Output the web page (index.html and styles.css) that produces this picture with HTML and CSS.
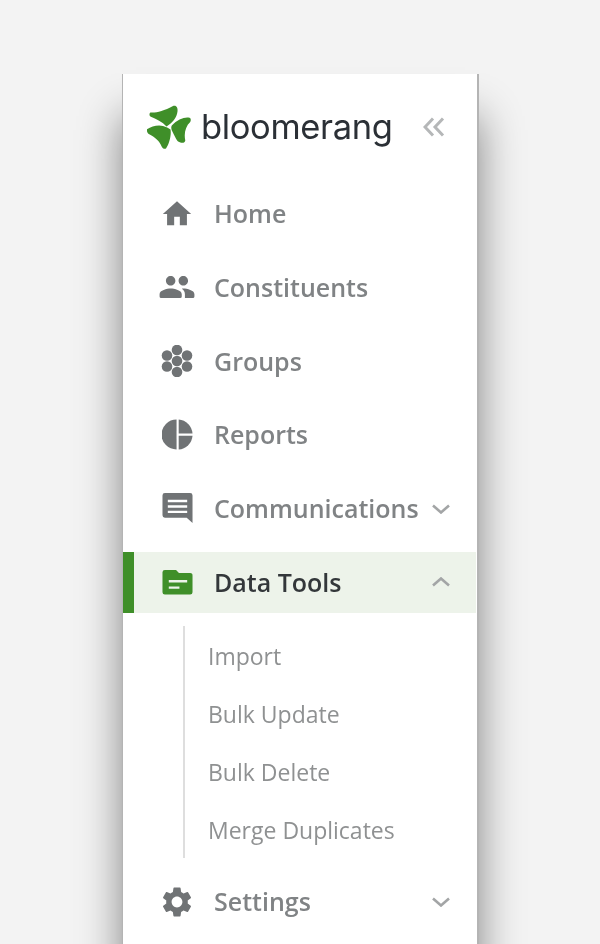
FILE: index.html
```html
<!DOCTYPE html>
<html lang="en">
<head>
<meta charset="utf-8">
<title>Bloomerang navigation</title>
<link rel="stylesheet" href="styles.css">
</head>
<body>
<aside class="sidebar">
  <header class="brand">
    <svg class="logo-mark" viewBox="0 0 44 44" width="44" height="44" aria-hidden="true">
      <path d="M3.500 7.500C9 8 16 6.500 26.500.8 29.500 0 31 3 30.500 6.500 29.800 12.500 25.500 18 19.500 21.500 15.500 17 9 14 3.800 11.800 2 10.800 2.300 8 3.500 7.500z"/>
      <path d="M42.500 12.800C38 11.500 30.500 14.500 24.800 20.500 23.800 22 24.300 24.800 25.500 26.800 27.500 30.500 28.500 33.500 30.500 36 33 38 37.800 39 38.300 35.500 36.800 29 38.300 21.500 43.200 17 44.200 15 43.800 13.300 42.500 12.800z"/>
      <path d="M.4 24C4 21.500 11 19.500 16 21 19 22 21.500 23 23.500 24.500 24.500 30 22.500 38.500 19 43.500 17.500 44.500 15.300 43.200 14.500 41.200 12.800 36.500 8 32 1.800 29 0 28-.4 25-.0 24.300z"/>
    </svg>
    <span class="wordmark">bloomerang</span>
    <svg class="collapse" viewBox="0 0 22 20" width="22" height="20" aria-hidden="true">
      <path d="M10 1.500 2 10l8 8.500M20 1.500 12 10l8 8.500"/>
    </svg>
  </header>
  <nav class="nav">
    <a class="row">
      <span class="icon"><svg viewBox="0 0 24 24" width="34" height="34"><path d="M10 20v-6h4v6h5v-8h3L12 3 2 12h3v8z"/></svg></span>
      <span class="label">Home</span>
    </a>
    <a class="row">
      <span class="icon"><svg viewBox="0 0 24 24" width="38" height="38"><path d="M16 11c1.660 0 2.990-1.340 2.990-3S17.660 5 16 5c-1.660 0-3 1.340-3 3s1.340 3 3 3zm-8 0c1.660 0 2.990-1.340 2.990-3S9.660 5 8 5C6.340 5 5 6.340 5 8s1.340 3 3 3zm0 2c-2.330 0-7 1.170-7 3.500V18a1 1 0 0 0 1 1h12a1 1 0 0 0 1-1v-1.500c0-2.330-4.670-3.500-7-3.500zm8 0c-.29 0-.62.020-.97.050 1.160.84 1.970 1.970 1.970 3.450V19h5a1 1 0 0 0 1-1v-1.500c0-2.330-4.670-3.500-7-3.500z"/></svg></span>
      <span class="label">Constituents</span>
    </a>
    <a class="row">
      <span class="icon"><svg viewBox="0 0 32 32" width="32" height="32"><circle cx="16" cy="5" r="5.300"/><circle cx="16" cy="27" r="5.300"/><circle cx="16" cy="16" r="5.300"/><circle cx="6" cy="10.500" r="5.300"/><circle cx="26" cy="10.500" r="5.300"/><circle cx="6" cy="21.500" r="5.300"/><circle cx="26" cy="21.500" r="5.300"/></svg></span>
      <span class="label">Groups</span>
    </a>
    <a class="row">
      <span class="icon"><svg viewBox="0 0 32 32" width="31" height="31"><path d="M15 .5v31A15.500 15.500 0 0 1 15 .5z"/><path d="M17.200.5A15.500 15.500 0 0 1 31.500 15h-14.300z"/><path d="M17.200 17.200h14.300A15.500 15.500 0 0 1 17.200 31.500z"/></svg></span>
      <span class="label">Reports</span>
    </a>
    <a class="row">
      <span class="icon"><svg viewBox="0 0 32 32" width="31" height="31"><path fill-rule="evenodd" d="M3 0h26a2.500 2.500 0 0 1 2.500 2.500V31l-6-5.500H3A2.500 2.500 0 0 1 .5 23V2.500A2.500 2.500 0 0 1 3 0zm3 7v2.500h20V7zm0 5.600v2.500h20v-2.500zm0 5.600v2.500h20v-2.500z"/></svg></span>
      <span class="label">Communications</span>
      <svg class="chevron" viewBox="0 0 20 10" width="20" height="10"><path d="M2 1.500 10 8.500l8-7"/></svg>
    </a>
    <a class="row row-active">
      <span class="icon"><svg viewBox="0 0 32 32" width="31" height="31"><path fill-rule="evenodd" d="M3 3h11.500l3 3.300H29A2.500 2.500 0 0 1 31.500 9v17a2.500 2.500 0 0 1-2.500 2.500H3A2.500 2.500 0 0 1 .5 26V5.500A2.500 2.500 0 0 1 3 3zm4 10.500V16h19v-2.500zm0 6.500v2.500h11V20z"/></svg></span>
      <span class="label">Data Tools</span>
      <svg class="chevron" viewBox="0 0 20 10" width="20" height="10"><path d="M2 8.500 10 1.500l8 7"/></svg>
    </a>
    <ul class="subnav">
      <li class="subitem">Import</li>
      <li class="subitem">Bulk Update</li>
      <li class="subitem">Bulk Delete</li>
      <li class="subitem">Merge Duplicates</li>
    </ul>
    <a class="row">
      <span class="icon"><svg viewBox="0 0 24 24" width="36" height="36"><path d="M19.140 12.940c.04-.3.060-.61.060-.94 0-.32-.02-.64-.07-.94l2.030-1.580a.49.490 0 0 0 .12-.61l-1.920-3.320a.488.488 0 0 0-.59-.22l-2.390.96c-.5-.38-1.030-.7-1.620-.94l-.36-2.540a.484.484 0 0 0-.48-.41h-3.840c-.24 0-.43.170-.47.410l-.36 2.540c-.59.24-1.130.57-1.620.94l-2.390-.96c-.22-.08-.47 0-.59.22L2.740 8.870c-.12.21-.08.47.12.61l2.030 1.580c-.05.3-.09.63-.09.94s.02.64.07.94l-2.030 1.580a.49.490 0 0 0-.12.61l1.920 3.320c.12.22.37.29.59.22l2.390-.96c.5.38 1.030.7 1.620.94l.36 2.540c.05.24.24.41.48.41h3.840c.24 0 .44-.17.47-.41l.36-2.540c.59-.24 1.130-.56 1.620-.94l2.390.96c.22.08.47 0 .59-.22l1.920-3.320c.12-.22.07-.47-.12-.61l-2.010-1.580zM12 15.600c-1.980 0-3.600-1.620-3.600-3.600s1.620-3.600 3.600-3.600 3.600 1.620 3.600 3.600-1.620 3.600-3.600 3.600z"/></svg></span>
      <span class="label">Settings</span>
      <svg class="chevron" viewBox="0 0 20 10" width="20" height="10"><path d="M2 1.500 10 8.500l8-7"/></svg>
    </a>
  </nav>
</aside>
</body>
</html>
```

FILE: styles.css
```css
* { box-sizing: border-box; }
html, body { height: 100%; }
html { overflow: hidden; }
body {
  margin: 0;
  background: #f3f3f3;
  font-family: "Open Sans", "Liberation Sans", sans-serif;
  overflow: hidden;
}
.sidebar {
  width: 357px;
  height: 870px;
  margin: 74px 0 0 122px;
  background: #fff;
  border-left: 1px solid #b4b4b4;
  border-right: 2px solid #b4b4b4;
  box-shadow: 0 42px 40px rgba(0, 0, 0, 0.46);
}
.brand, .nav { filter: blur(0.35px); }
.brand {
  display: flex;
  align-items: center;
  height: 109px;
  padding: 0 0 4px 24px;
}
.logo-mark { fill: #3f8f29; flex: none; }
.wordmark {
  margin-left: 10px;
  width: 191px;
  font-family: "Inter", sans-serif;
  font-size: 34.5px;
  line-height: 1;
  font-weight: 400;
  color: #2b3036;
  letter-spacing: -0.35px;
  padding-top: 2px;
  white-space: nowrap;
  flex: none;
}
.collapse {
  fill: none;
  stroke: #b5b7b8;
  stroke-width: 3;
  margin-left: 31px;
  flex: none;
}
.nav { display: flex; flex-direction: column; }
.row {
  display: flex;
  align-items: center;
  height: 61px;
  margin-bottom: 12.8px;
  padding: 0 26px 0 34px;
  color: #808385;
}
.row-active {
  margin-bottom: 0;
  margin-right: 1px;
  padding-right: 25px;
  background: #edf3ea;
  box-shadow: inset 11px 0 0 #3f8f29;
  color: #33373a;
}
.icon {
  display: flex;
  align-items: center;
  justify-content: center;
  width: 40px;
  height: 40px;
  flex: none;
}
.icon svg { fill: #707375; display: block; }
.row-active .icon svg { fill: #3f8f29; }
.label {
  margin-left: 17px;
  font-size: 25px;
  font-weight: 600;
  line-height: 1;
  white-space: nowrap;
}
.chevron {
  margin-left: auto;
  fill: none;
  stroke: #a3a5a6;
  stroke-width: 2.6;
  flex: none;
}
.subnav {
  list-style: none;
  margin: 13px 0 13.5px 60px;
  padding: 0 0 0 23px;
  border-left: 2px solid #dedede;
}
.subitem {
  display: flex;
  align-items: center;
  height: 58px;
  padding-top: 2px;
  font-size: 23px;
  color: #8f9192;
  white-space: nowrap;
}
```
